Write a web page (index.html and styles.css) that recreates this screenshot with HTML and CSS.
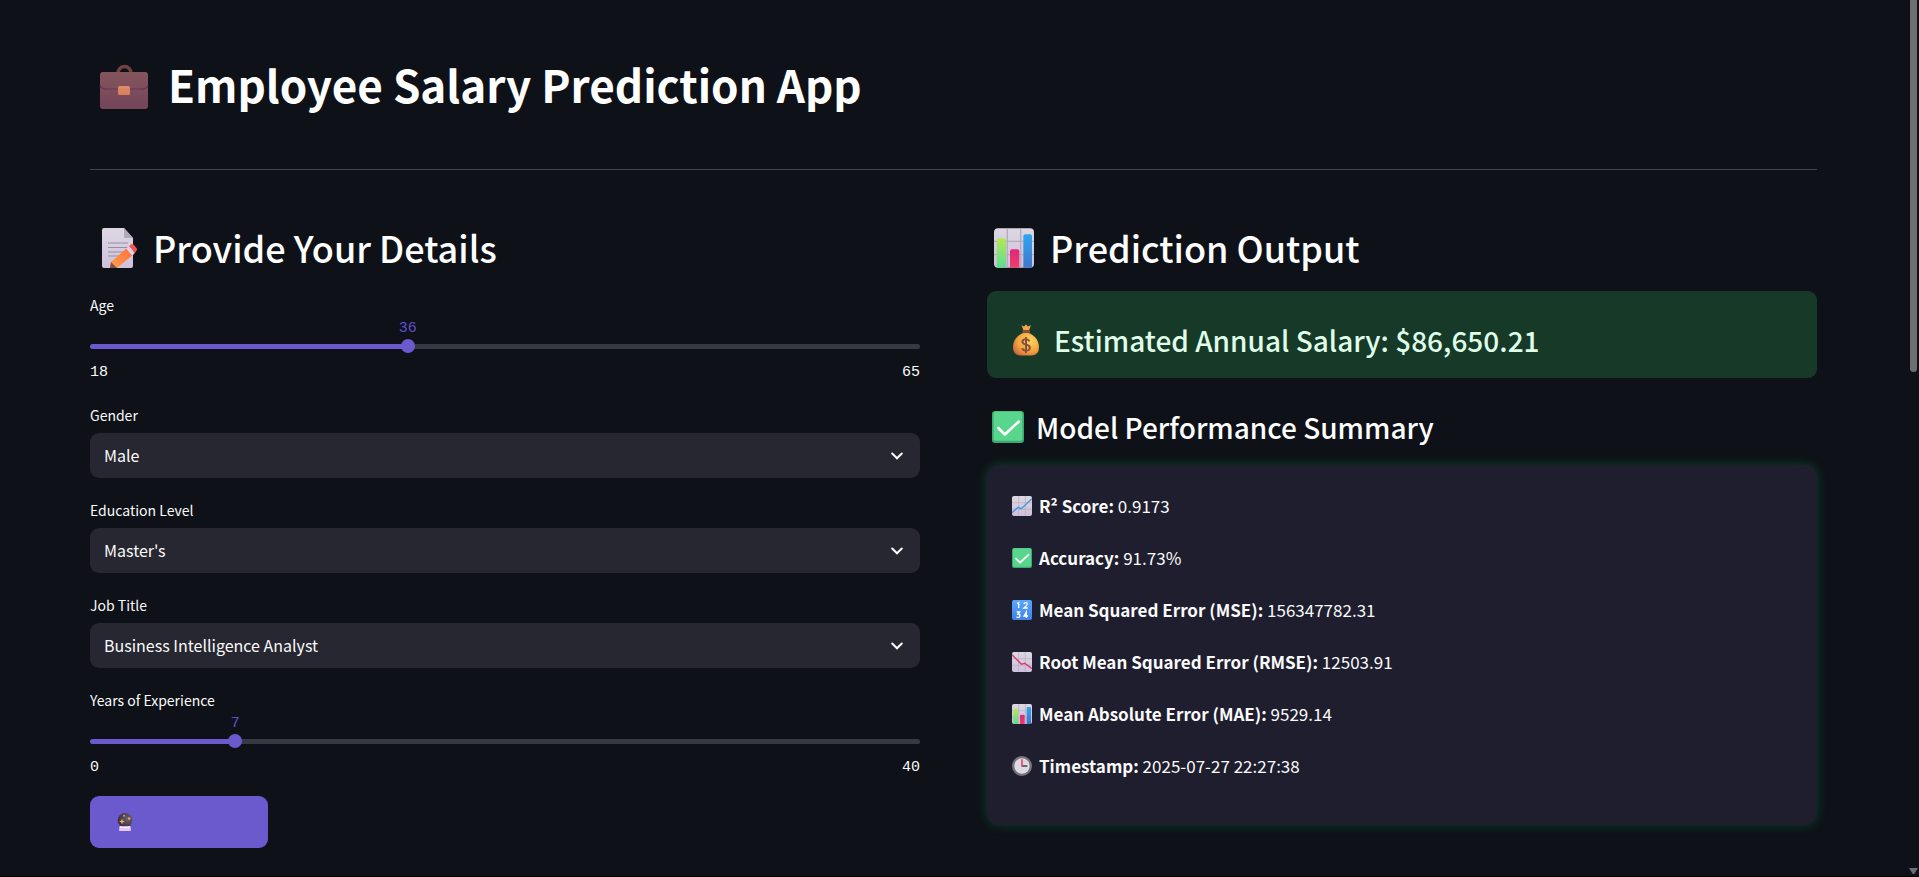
FILE: index.html
```html
<!DOCTYPE html>
<html lang="en">
<head>
<meta charset="utf-8">
<meta name="viewport" content="width=device-width, initial-scale=1">
<title>Employee Salary Prediction App</title>
<link rel="stylesheet" href="styles.css">
</head>
<body>
<svg class="defs" aria-hidden="true">
  <defs>
    <linearGradient id="paper" x1="0" y1="0" x2="0" y2="1"><stop offset="0" stop-color="#dcd8e2"/><stop offset="1" stop-color="#cfc0dc"/></linearGradient>
    <linearGradient id="case" x1="0" y1="0" x2="0" y2="1"><stop offset="0" stop-color="#85565c"/><stop offset="1" stop-color="#74445c"/></linearGradient>
    <linearGradient id="clasp" x1="0" y1="0" x2="0" y2="1"><stop offset="0" stop-color="#d98e6c"/><stop offset="1" stop-color="#dd7a58"/></linearGradient>
    <linearGradient id="pencil" x1="1" y1="0" x2="0" y2="1"><stop offset="0" stop-color="#ff6a3c"/><stop offset="1" stop-color="#ffa24a"/></linearGradient>
    <linearGradient id="lime" x1="0" y1="0" x2="0" y2="1"><stop offset="0" stop-color="#b4e854"/><stop offset="1" stop-color="#5ddc94"/></linearGradient>
    <linearGradient id="pink" x1="0" y1="0" x2="0" y2="1"><stop offset="0" stop-color="#e0267e"/><stop offset="1" stop-color="#ea4068"/></linearGradient>
    <linearGradient id="blue" x1="0" y1="0" x2="0" y2="1"><stop offset="0" stop-color="#2ea6f2"/><stop offset="1" stop-color="#4078cc"/></linearGradient>
    <linearGradient id="tile" x1="0" y1="0" x2="0" y2="1"><stop offset="0" stop-color="#5aa6ff"/><stop offset="1" stop-color="#3f83e8"/></linearGradient>
    <radialGradient id="gold" cx=".65" cy=".35" r=".8"><stop offset="0" stop-color="#ffd65c"/><stop offset=".6" stop-color="#f2a03e"/><stop offset="1" stop-color="#c9603c"/></radialGradient>
    <radialGradient id="orb" cx=".7" cy=".4" r=".7"><stop offset="0" stop-color="#6a6270"/><stop offset="1" stop-color="#3a2c42"/></radialGradient>
    <symbol id="grid" viewBox="0 0 32 32">
      <rect x="1" y="1" width="30" height="30" rx="3" fill="url(#paper)"/>
      <path d="M11 1v30M21 1v30M1 11h30M1 21h30" stroke="#b5abbd" stroke-width="1" fill="none"/>
    </symbol>
    <symbol id="bars" viewBox="0 0 32 32">
      <use href="#grid"/>
      <path d="M3 31V10a1.500 1.500 0 0 1 1.500-1.500h4A1.500 1.500 0 0 1 10 10v21z" fill="url(#lime)"/>
      <path d="M13 31V18.500a1.500 1.500 0 0 1 1.500-1.500h4A1.500 1.500 0 0 1 20 18.500V31z" fill="url(#pink)"/>
      <path d="M23 31V7a1.500 1.500 0 0 1 1.500-1.500h3.500A1.500 1.500 0 0 1 29.500 7v24z" fill="url(#blue)"/>
    </symbol>
    <symbol id="check" viewBox="0 0 32 32">
      <rect x="1" y="1" width="30" height="30" rx="3" fill="#3fa870"/>
      <rect x="2.500" y="1.500" width="27" height="27.500" rx="2" fill="#59d68e"/>
      <path d="M7 17l6 6L26 11" fill="none" stroke="#fff" stroke-width="2.500" stroke-linecap="round" stroke-linejoin="round"/>
    </symbol>
  </defs>
</svg>

<main class="page">
  <h1 class="title">
    <svg class="title-icon" viewBox="0 0 50 46" aria-hidden="true">
      <path d="M19 9a6.500 6.500 0 0 1 13 0" fill="none" stroke="#6f423f" stroke-width="3.500"/>
      <rect x="1" y="8" width="48" height="37" rx="3" fill="url(#case)"/>
      <path d="M1 21q1 4 6 4h36q5 0 6-4" fill="none" stroke="#693552" stroke-width="1.200"/>
      <rect x="19" y="22" width="12" height="9" rx="1.500" fill="url(#clasp)"/>
    </svg>
    <span>Employee Salary Prediction App</span>
  </h1>
  <hr class="rule">

  <div class="columns">
    <form class="form">
      <h2 class="heading heading-form">
        <svg class="heading-icon" viewBox="0 0 40 42" aria-hidden="true">
          <path d="M5 1h20l9 10v28a2 2 0 0 1-2 2H5a2 2 0 0 1-2-2V3a2 2 0 0 1 2-2z" fill="url(#paper)"/>
          <path d="M25 1l9 10h-8a1 1 0 0 1-1-1z" fill="#b3a9ba"/>
          <path d="M9 16h20M9 20.500h20M9 25h18M9 29h13" stroke="#988ea2" stroke-width="1.200"/>
          <path d="M12 35L29 20l6 7-17 14-7 0z" fill="url(#pencil)"/>
          <path d="M12 35l6 6h-7z" fill="#8d4c50"/>
          <path d="M27 21.500l3-2.500 6 7-3 2.500z" fill="#ddd2e8"/>
          <path d="M30 19l2-1.600q1.500-1 3 .6l2.500 3q1.300 1.700-.2 3L36 26z" fill="#f8524c"/>
        </svg>
        <span>Provide Your Details</span>
      </h2>

      <div class="field field-slider">
        <label class="label" for="age">Age</label>
        <div class="slider" style="--pos: 38.3%">
          <output class="slider-value" for="age">36</output>
          <input class="slider-input" id="age" type="range" min="18" max="65" value="36">
        </div>
        <div class="limits"><span>18</span><span>65</span></div>
      </div>

      <div class="field">
        <label class="label" for="gender">Gender</label>
        <div class="select">
          <select class="select-input" id="gender"><option>Male</option><option>Female</option></select>
          <svg class="chevron" viewBox="0 0 12 8" aria-hidden="true"><path d="M1.200 1.500L6 6.300l4.800-4.800"/></svg>
        </div>
      </div>

      <div class="field">
        <label class="label" for="education">Education Level</label>
        <div class="select">
          <select class="select-input" id="education"><option>Master's</option></select>
          <svg class="chevron" viewBox="0 0 12 8" aria-hidden="true"><path d="M1.200 1.500L6 6.300l4.800-4.800"/></svg>
        </div>
      </div>

      <div class="field">
        <label class="label" for="job">Job Title</label>
        <div class="select">
          <select class="select-input" id="job"><option>Business Intelligence Analyst</option></select>
          <svg class="chevron" viewBox="0 0 12 8" aria-hidden="true"><path d="M1.200 1.500L6 6.300l4.800-4.800"/></svg>
        </div>
      </div>

      <div class="field field-slider field-last">
        <label class="label" for="years">Years of Experience</label>
        <div class="slider" style="--pos: 17.5%">
          <output class="slider-value" for="years">7</output>
          <input class="slider-input" id="years" type="range" min="0" max="40" value="7">
        </div>
        <div class="limits"><span>0</span><span>40</span></div>
      </div>

      <button class="predict" type="button" aria-label="Predict">
        <svg class="predict-icon" viewBox="0 0 16 18" aria-hidden="true">
          <path d="M3 13h10l1 4q0 1-1 1H3q-1 0-1-1z" fill="#e6c9f5"/>
          <circle cx="8" cy="7.300" r="7.300" fill="url(#orb)"/>
          <path d="M2.800 13.300h10.400l.4 1.700H2.400z" fill="#f6e9fb"/>
          <path d="M5 5.500l.8 2.200L8 8.500l-2.200.8L5 11.500l-.8-2.200L2 8.500l2.200-.8z" fill="#ffb052"/>
          <circle cx="12.200" cy="5.500" r="1.300" fill="#f0a050"/>
          <circle cx="7" cy="2.700" r="1" fill="#e8964c"/>
        </svg>
      </button>
    </form>

    <section class="results">
      <h2 class="heading heading-output">
        <svg class="heading-icon" viewBox="1 0 30 32" preserveAspectRatio="none" aria-hidden="true"><use href="#bars" width="32" height="32"/></svg>
        <span>Prediction Output</span>
      </h2>

      <div class="salary">
        <svg class="salary-icon" viewBox="0 0 28 36" preserveAspectRatio="none" aria-hidden="true">
          <path d="M9.500 1.500l2.500 1.300L14 .5l2 2.300 3-1.300-2 5.500h-5.500z" fill="#f5a544"/>
          <path d="M11.500 10C6 12 1 18 1 26q0 9 7 9.500h12q7-.5 7-9.500c0-8-5-14-10.500-16z" fill="url(#gold)"/>
          <path d="M10.500 7h7.500v3h-7.500z" fill="#8c5047"/>
          <path d="M17.500 19.500q-1-2.500-3.500-2.500-3.600 0-3.600 3 0 2.400 3.600 3.200 3.800.8 3.800 3.500 0 3.300-3.800 3.300-3 0-3.700-2.800M14 14.500v18" fill="none" stroke="#85503c" stroke-width="2"/>
        </svg>
        <h3 class="salary-text">Estimated Annual Salary: $86,650.21</h3>
      </div>

      <h3 class="summary-heading">
        <svg class="summary-icon" viewBox="1 1 30 30" aria-hidden="true"><use href="#check" width="32" height="32"/></svg>
        <span>Model Performance Summary</span>
      </h3>

      <div class="card">
        <p class="metric">
          <svg class="metric-icon" viewBox="1 1 30 30" aria-hidden="true"><use href="#grid" width="32" height="32"/><path d="M1 26l9-8 5 2L31 5" fill="none" stroke="#3f97dc" stroke-width="2"/></svg>
          <span><strong>R² Score:</strong> 0.9173</span>
        </p>
        <p class="metric">
          <svg class="metric-icon" viewBox="1 1 30 30" aria-hidden="true"><use href="#check" width="32" height="32"/></svg>
          <span><strong>Accuracy:</strong> 91.73%</span>
        </p>
        <p class="metric">
          <svg class="metric-icon" viewBox="1 1 30 30" aria-hidden="true">
            <rect x="1" y="1" width="30" height="30" rx="3" fill="url(#tile)"/>
            <path d="M8.500 6.500L11 5v8M19 7q0-2 2.500-2T24 7q0 1.500-5 6h5.500M8 19h4.500L10 22q3 0 3 2.500T10.500 27 8 26M22.500 28v-9L19 25h6" fill="none" stroke="#fff" stroke-width="2"/>
          </svg>
          <span><strong>Mean Squared Error (MSE):</strong> 156347782.31</span>
        </p>
        <p class="metric">
          <svg class="metric-icon" viewBox="1 1 30 30" aria-hidden="true"><use href="#grid" width="32" height="32"/><path d="M1 5l14 14.500 5-1.500L31 26" fill="none" stroke="#e0346a" stroke-width="2"/></svg>
          <span><strong>Root Mean Squared Error (RMSE):</strong> 12503.91</span>
        </p>
        <p class="metric">
          <svg class="metric-icon" viewBox="1 1 30 30" aria-hidden="true"><use href="#bars" width="32" height="32"/></svg>
          <span><strong>Mean Absolute Error (MAE):</strong> 9529.14</span>
        </p>
        <p class="metric">
          <svg class="metric-icon" viewBox="1 1 30 30" aria-hidden="true">
            <circle cx="16" cy="16" r="15" fill="#77737a"/><circle cx="16" cy="16" r="11.500" fill="#dedae2"/>
            <path d="M16 16h8" stroke="#5a4a64" stroke-width="2.500"/><path d="M16 17V6" stroke="#e0486a" stroke-width="2.500"/>
          </svg>
          <span><strong>Timestamp:</strong> 2025-07-27 22:27:38</span>
        </p>
      </div>
    </section>
  </div>
</main>

<div class="scrollbar" aria-hidden="true">
  <div class="scrollbar-thumb"></div>
  <svg class="scrollbar-arrow" viewBox="0 0 9 6"><path d="M0 0h9L5.500 5.500q-1 1-2 0z"/></svg>
</div>
</body>
</html>
```

FILE: styles.css
```css
* {
  box-sizing: border-box;
}

body {
  margin: 0;
  background: #0e1117;
  color: #fafafa;
  font-family: "Noto Sans CJK SC", "Noto Sans", sans-serif;
  font-size: 16px;
  line-height: 24px;
}

body::after {
  content: "";
  position: fixed;
  right: 0;
  bottom: 0;
  left: 0;
  height: 1px;
  background: #000;
}

.defs {
  position: absolute;
  width: 0;
  height: 0;
}

.page {
  padding: 52px 102px 28px 90px;
}

.title,
.heading,
.summary-heading,
.salary-text {
  margin: 0;
  color: #fff;
  font-weight: 700;
}

.title {
  display: flex;
  align-items: center;
  gap: 19px;
  padding-left: 9px;
  font-size: 44px;
  line-height: 64px;
}

.title-icon {
  width: 50px;
  height: 46px;
  margin-top: 6px;
}

.rule {
  height: 1px;
  margin: 53px 0;
  border: 0;
  background: #434446;
}

.columns {
  display: grid;
  grid-template-columns: 1fr 1fr;
  gap: 67px;
}

.heading {
  display: flex;
  align-items: center;
  font-size: 36px;
  font-weight: 500;
  line-height: 48px;
}

.heading-form {
  gap: 14px;
  padding-left: 9px;
  margin-bottom: 22px;
}

.heading-output {
  gap: 16px;
  padding-left: 7px;
  margin-bottom: 20px;
}

.heading-icon {
  width: 40px;
  height: 42px;
  margin-top: 2px;
}

.field {
  margin-bottom: 20px;
}

.label {
  display: block;
  font-size: 14px;
  line-height: 24px;
  margin-bottom: 6px;
}

.field-slider {
  margin-bottom: 18px;
}

.field-slider .label {
  margin-bottom: 0;
}

.field-last {
  margin-bottom: 16px;
}

.slider {
  position: relative;
  display: flex;
  align-items: center;
  height: 14px;
  margin-top: 22px;
}

.slider::before {
  content: "";
  flex: 1;
  height: 5px;
  border-radius: 3px;
  background: linear-gradient(to right, #6a5acd var(--pos), #373a43 var(--pos));
}

.slider-input {
  position: absolute;
  left: -7px;
  width: calc(100% + 14px);
  height: 14px;
  margin: 0;
  appearance: none;
  background: transparent;
}

.slider-input::-webkit-slider-thumb {
  appearance: none;
  width: 14px;
  height: 14px;
  border-radius: 50%;
  background: #6a5acd;
}

.slider-value {
  position: absolute;
  left: var(--pos);
  bottom: 14px;
  transform: translateX(-50%);
  color: #5f50d2;
  font-family: "Liberation Mono", monospace;
  font-size: 15px;
  line-height: 20px;
}

.limits {
  display: flex;
  justify-content: space-between;
  padding-top: 8px;
  font-family: "Liberation Mono", monospace;
  font-size: 15px;
  line-height: 24px;
}

.select {
  position: relative;
}

.select-input {
  display: block;
  width: 100%;
  height: 45px;
  padding: 0 40px 2px 14px;
  appearance: none;
  border: 0;
  border-radius: 9px;
  background: #262730;
  color: #fafafa;
  font: inherit;
}

.chevron {
  position: absolute;
  top: 19px;
  right: 17px;
  width: 12px;
  height: 8px;
  fill: none;
  stroke: #fafafa;
  stroke-width: 2;
  stroke-linecap: round;
  pointer-events: none;
}

.predict {
  display: flex;
  align-items: center;
  width: 178px;
  height: 52px;
  padding: 0 27px;
  border: 0;
  border-radius: 9px;
  background: #6a5acd;
}

.predict-icon {
  width: 16px;
  height: 18px;
}

.salary {
  display: flex;
  align-items: center;
  gap: 14px;
  padding: 25px 25px 14px;
  margin-bottom: 25px;
  border-radius: 9px;
  background: #173928;
}

.salary-icon {
  width: 28px;
  height: 32px;
}

.salary-text {
  color: #dffde9;
  font-size: 28px;
  font-weight: 500;
  line-height: 48px;
}

.summary-heading {
  display: flex;
  align-items: center;
  gap: 12px;
  padding-left: 5px;
  margin-bottom: 14px;
  font-size: 28px;
  font-weight: 500;
  line-height: 48px;
}

.summary-icon {
  width: 32px;
  height: 32px;
}

.card {
  display: grid;
  gap: 28px;
  padding: 29px 25px 47px;
  border-radius: 12px;
  background: #1e1e2e;
  box-shadow: 0 0 12px rgba(0, 255, 128, 0.2);
}

.metric {
  display: flex;
  align-items: center;
  gap: 7px;
  margin: 0;
  font-size: 17px;
}

.metric-icon {
  width: 20px;
  height: 20px;
}

.scrollbar {
  position: fixed;
  top: 0;
  right: 0;
  bottom: 0;
  display: flex;
  flex-direction: column;
  align-items: center;
  justify-content: space-between;
  width: 12px;
  padding-bottom: 3px;
}

.scrollbar-thumb {
  width: 7px;
  height: 372px;
  border-radius: 0 0 4px 4px;
  background: #6e6f73;
}

.scrollbar-arrow {
  width: 9px;
  height: 6px;
  fill: #6e6f73;
}
```
